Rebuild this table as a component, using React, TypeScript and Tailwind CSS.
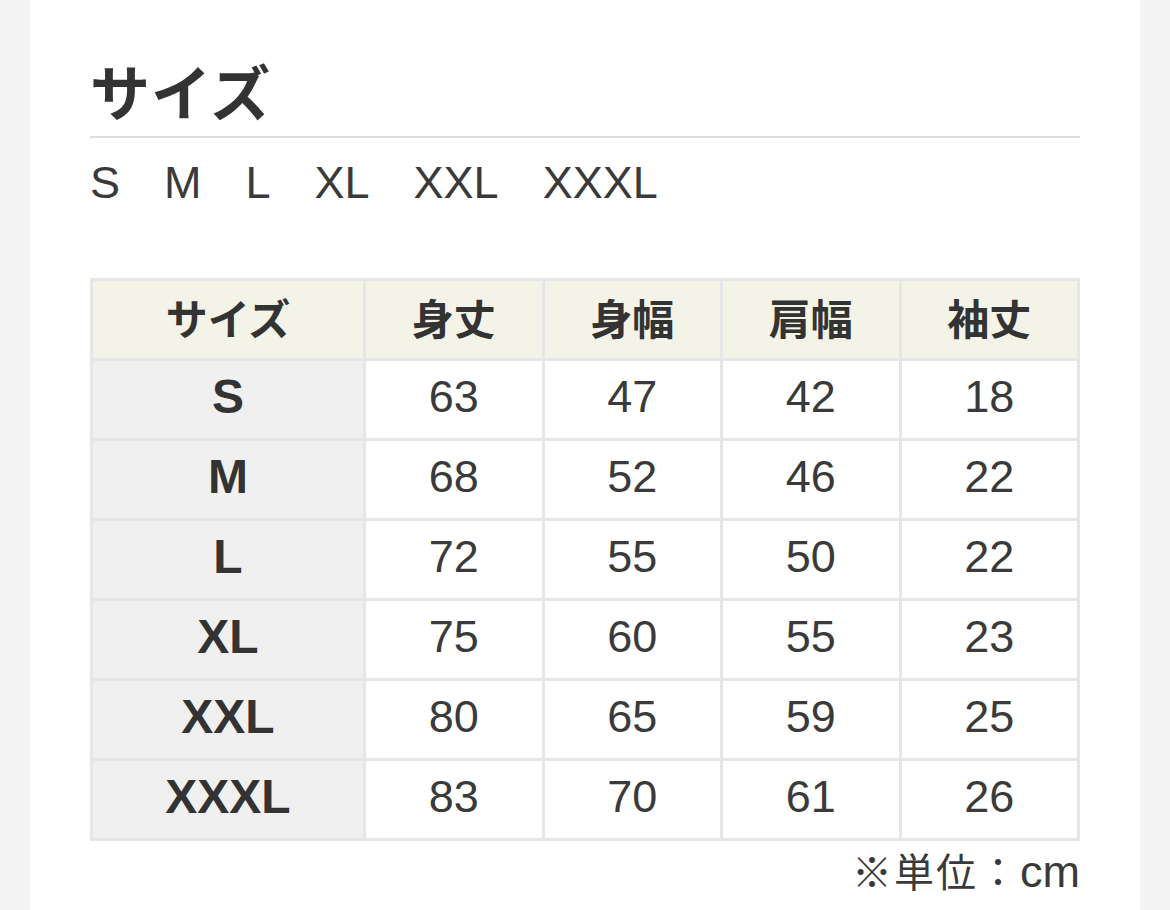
import React from "react";

const rows = [
  ["S", "63", "47", "42", "18"],
  ["M", "68", "52", "46", "22"],
  ["L", "72", "55", "50", "22"],
  ["XL", "75", "60", "55", "23"],
  ["XXL", "80", "65", "59", "25"],
  ["XXXL", "83", "70", "61", "26"],
];
const headers = ["サイズ", "身丈", "身幅", "肩幅", "袖丈"];

export default function App() {
  return (
    <div
      className="h-[910px] w-[1170px] overflow-hidden bg-[#f4f4f4] px-[30px] text-[#333]"
      style={{ fontFamily: '"Liberation Sans", "Noto Sans CJK JP", sans-serif' }}
    >
      <div className="h-full bg-white px-[60px] pt-[60px]">
        <h1
          className="text-[60px] font-bold leading-[60px] tracking-[1px]"
          style={{ fontFamily: '"Noto Sans CJK JP", sans-serif' }}
        >
          サイズ
        </h1>
        <div className="mt-[16px] h-[2px] bg-[#dedede]" />
        <div className="mt-[20px] flex gap-[44px] text-[45px] leading-[50px] text-[#3a3a3a]">
          {["S", "M", "L", "XL", "XXL", "XXXL"].map((s) => (
            <span key={s}>{s}</span>
          ))}
        </div>
        <div className="mt-[70px] grid grid-cols-[270px_repeat(4,1fr)] gap-[3px] bg-[#e6e6e6] p-[3px]">
          {headers.map((h) => (
            <div
              key={h}
              className="flex h-[77px] items-center justify-center bg-[#f3f3e8] pb-[6px] text-[42px] font-bold"
              style={{ fontFamily: '"Noto Sans CJK JP", sans-serif' }}
            >
              {h}
            </div>
          ))}
          {rows.map((r) =>
            r.map((c, i) => (
              <div
                key={r[0] + i}
                className={
                  i === 0
                    ? "flex h-[77px] items-center justify-center bg-[#f0f0f0] pb-[6px] text-[48px] font-bold"
                    : "flex h-[77px] items-center justify-center bg-white pb-[6px] text-[45px] text-[#3a3a3a]"
                }
              >
                {c}
              </div>
            ))
          )}
        </div>
        <div className="mt-[6px] text-right leading-[46px] text-[#3a3a3a]">
          <span
            className="text-[40px] tracking-[2px]"
            style={{ fontFamily: '"Noto Sans CJK JP", sans-serif' }}
          >
            ※単位：
          </span>
          <span className="text-[45px]">cm</span>
        </div>
      </div>
    </div>
  );
}
